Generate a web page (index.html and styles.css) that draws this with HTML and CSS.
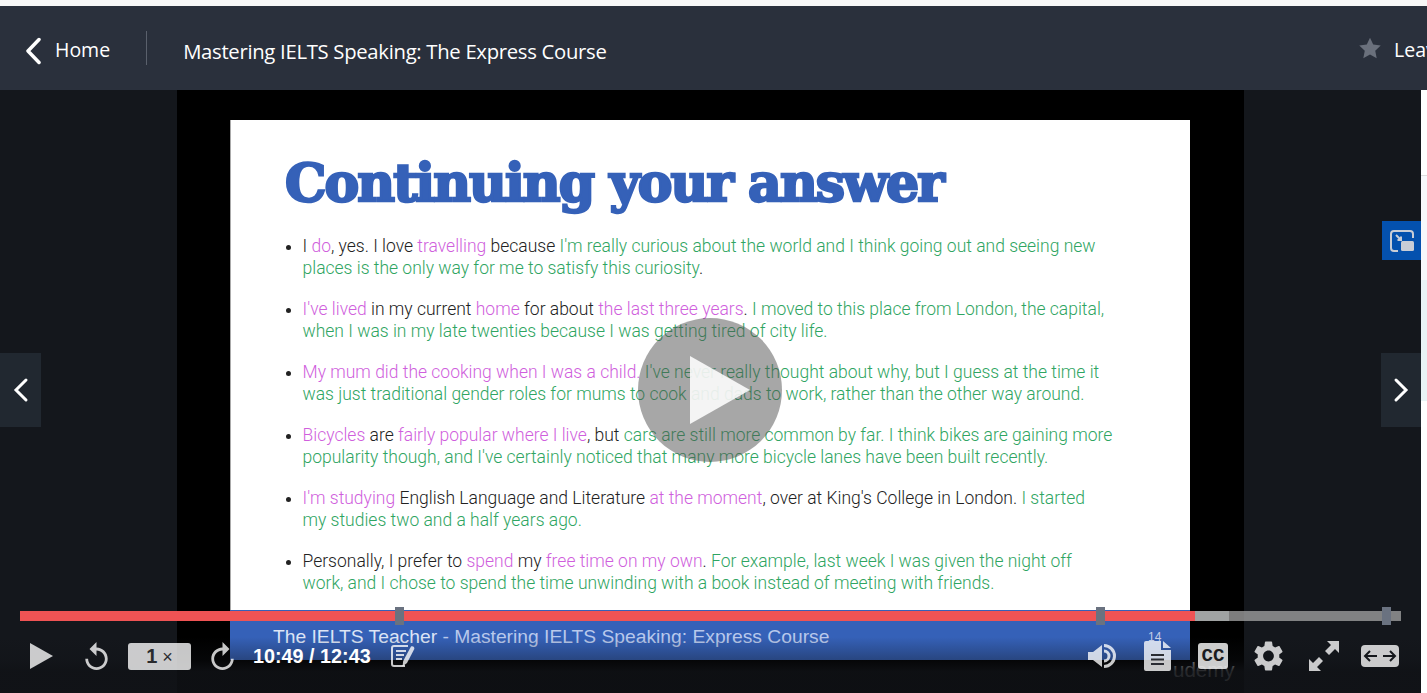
FILE: index.html
```html
<!DOCTYPE html>
<html lang="en">
<head>
    <meta charset="UTF-8">
    <meta name="viewport" content="width=device-width, initial-scale=1.0">
    <title>Mastering IELTS Speaking: The Express Course</title>
    <link rel="stylesheet" href="styles.css">
</head>
<body>
    <div class="top-strip"></div>
    <header class="header">
        <svg class="back-icon" viewBox="0 0 16 28"><path d="M14 2.500 3 14l11 11.500" /></svg>
        <a class="home-link">Home</a>
        <span class="divider"></span>
        <span class="course-title">Mastering IELTS Speaking: The Express Course</span>
        <div class="review">
            <svg class="star-icon" viewBox="0 0 24 24"><path d="M12 .8l3.500 7.500 8.200 1-6 5.700 1.600 8.200-7.300-4.100-7.300 4.100 1.600-8.200-6-5.700 8.200-1z"/></svg>
            <span>Leave a review</span>
        </div>
    </header>

    <main class="player">
        <div class="side"></div>
        <div class="video">
            <div class="slide">
                <h1 class="slide-title">Continuing your answer</h1>
                <ul class="points">
                    <li>I <span class="p">do</span>, yes. I love <span class="p">travelling</span> because <span class="g">I'm really curious about the world and I think going out and seeing new<br>places is the only way for me to satisfy this curiosity</span>.</li>
                    <li><span class="p">I've lived</span> in my current <span class="p">home</span> for about <span class="p">the last three years</span>. <span class="g">I moved to this place from London, the capital,<br>when I was in my late twenties because I was getting tired of city life.</span></li>
                    <li><span class="p">My mum did the cooking when I was a child.</span> <span class="g">I've never really thought about why, but I guess at the time it<br>was just traditional gender roles for mums to cook and dads to work, rather than the other way around.</span></li>
                    <li><span class="p">Bicycles</span> are <span class="p">fairly popular where I live</span>, but <span class="g">cars are still more common by far. I think bikes are gaining more<br>popularity though, and I've certainly noticed that many more bicycle lanes have been built recently.</span></li>
                    <li><span class="p">I'm studying</span> English Language and Literature <span class="p">at the moment</span>, over at King's College in London. <span class="g">I started<br>my studies two and a half years ago.</span></li>
                    <li>Personally, I prefer to <span class="p">spend</span> my <span class="p">free time on my own</span>. <span class="g">For example, last week I was given the night off<br>work, and I chose to spend the time unwinding with a book instead of meeting with friends.</span></li>
                </ul>
            </div>
            <div class="band"><b>The IELTS Teacher</b> - Mastering IELTS Speaking: Express Course</div>
            <div class="watermark">udemy</div>
        </div>
        <div class="side"></div>
        <div class="edge">
            <div class="edge-white"></div>
            <div class="edge-grey"></div>
            <div class="edge-blue"></div>
        </div>

        <!-- things lying over the video -->
        <button class="nav nav-prev"><svg viewBox="0 0 16 28"><path d="M13 4 3 14l10 10"/></svg></button>
        <button class="nav nav-next"><svg viewBox="0 0 16 28"><path d="M3 4l10 10L3 24"/></svg></button>
        <button class="pip">
            <svg viewBox="0 0 26 26"><path class="pip-line" d="M24 10V6a3 3 0 0 0-3-3H5a3 3 0 0 0-3 3v14a3 3 0 0 0 3 3h4M7 7l5 5M12 8.500V12H8.500"/><rect x="12" y="13" width="13" height="10" rx="1.500"/></svg>
        </button>

        <div class="play-big">
            <svg viewBox="0 0 60 68"><path d="M0 0l60 34L0 68z"/></svg>
        </div>

        <div class="controls">
            <div class="progress">
                <div class="played"></div>
                <div class="buffered"></div>
                <span class="mark mark-1"></span>
                <span class="mark mark-2"></span>
                <span class="mark mark-3"></span>
            </div>
            <div class="control-row">
                <div class="control-group">
                    <svg class="ctl ctl-play" viewBox="0 0 23 26"><path d="M0 0l23 13L0 26z"/></svg>
                    <svg class="ctl ctl-seek" viewBox="4 1 16 20"><path d="M12 5V1L7 6l5 5V7c3.310 0 6 2.690 6 6s-2.690 6-6 6-6-2.690-6-6H4c0 4.420 3.580 8 8 8s8-3.580 8-8-3.580-8-8-8z"/></svg>
                    <div class="speed">1<small>×</small></div>
                    <svg class="ctl ctl-seek ctl-forward" viewBox="4 1 16 20"><path d="M12 5V1L7 6l5 5V7c3.310 0 6 2.690 6 6s-2.690 6-6 6-6-2.690-6-6H4c0 4.420 3.580 8 8 8s8-3.580 8-8-3.580-8-8-8z"/></svg>
                    <span class="time">10:49 / 12:43</span>
                    <svg class="ctl ctl-notes" viewBox="0 0 24 22"><path class="notes-line" d="M17 1H3a2 2 0 0 0-2 2v16a2 2 0 0 0 2 2h11M5 6h10M5 10h8M5 14h6"/><path d="M20 1.500c1.800-1 3.800.6 3.300 2.500L16 18l-4.500 3.500.7-5.500z"/></svg>
                </div>
                <div class="control-group right">
                    <svg class="ctl ctl-volume" viewBox="0 0 28 24"><path d="M0 8h5l9-7v22l-9-7H0z"/><path class="arc" d="M16 7a5 5 0 0 1 0 10M16 1.500a10.500 10.500 0 0 1 0 21"/></svg>
                    <div class="doc">
                        <span class="doc-count">14</span>
                        <svg class="ctl ctl-doc" viewBox="0 0 27 30"><path d="M2 0h15v9h10v19a2 2 0 0 1-2 2H2a2 2 0 0 1-2-2V2a2 2 0 0 1 2-2zM19 0l8 7h-8z"/><path class="doc-lines" d="M7 14h13M7 18.500h13M7 23h13"/></svg>
                    </div>
                    <div class="cc">CC</div>
                    <svg class="ctl ctl-gear" viewBox="2.400 2 19.200 20"><path d="M19.140 12.940c.04-.3.06-.61.06-.94 0-.32-.02-.64-.07-.94l2.030-1.580c.18-.14.23-.41.12-.61l-1.920-3.320c-.12-.22-.37-.29-.59-.22l-2.390.96c-.5-.38-1.030-.7-1.620-.94l-.36-2.540c-.04-.24-.24-.41-.48-.41h-3.840c-.24 0-.43.17-.47.41l-.36 2.540c-.59.24-1.130.57-1.620.94l-2.390-.96c-.22-.08-.47 0-.59.22L2.740 8.870c-.12.21-.08.47.12.61l2.030 1.580c-.05.3-.09.63-.09.94s.02.64.07.94l-2.030 1.580c-.18.14-.23.41-.12.61l1.920 3.320c.12.22.37.29.59.22l2.390-.96c.5.38 1.030.7 1.620.94l.36 2.540c.05.24.24.41.48.41h3.840c.24 0 .44-.17.47-.41l.36-2.540c.59-.24 1.130-.56 1.620-.94l2.390.96c.22.08.47 0 .59-.22l1.920-3.320c.12-.22.07-.47-.12-.61l-2.010-1.580zM12 15.600c-1.980 0-3.600-1.620-3.600-3.600s1.620-3.600 3.600-3.600 3.600 1.620 3.600 3.600-1.620 3.600-3.600 3.600z"/></svg>
                    <svg class="ctl ctl-expand" viewBox="0 0 30 30"><path d="M18 0h12v12l-4-4-6 6-4-4 6-6zM12 30H0V18l4 4 6-6 4 4-6 6z"/></svg>
                    <svg class="ctl ctl-wide" viewBox="0 0 38 22"><rect width="38" height="22" rx="4"/><path class="wide-arrows" d="M16 11H4M9 6l-5 5 5 5M22 11h12M29 6l5 5-5 5"/></svg>
                </div>
            </div>
        </div>
    </main>
</body>
</html>
```

FILE: styles.css
```css
* {
    box-sizing: border-box;
}
body {
    margin: 0;
    height: 693px;
    overflow: hidden;
    background: #14171c;
    font-family: "Open Sans", Arial, sans-serif;
}
.top-strip {
    height: 6px;
    background: #f7f7f7;
}

/* header */
.header {
    height: 84px;
    padding: 5px 0 0 25px;
    display: flex;
    align-items: center;
    overflow: hidden;
    background: #2a303c;
    color: #fff;
}
.back-icon {
    width: 16px;
    height: 28px;
    flex-shrink: 0;
}
.back-icon path {
    fill: none;
    stroke: #fff;
    stroke-width: 3.500;
    stroke-linecap: round;
    stroke-linejoin: round;
}
.home-link {
    margin: 0 0 2px 14px;
    font-size: 19.500px;
}
.divider {
    width: 1px;
    height: 34px;
    margin: 0 36px 5px 36px;
    background: #5a606c;
}
.course-title {
    margin-top: 1px;
    font-size: 20.300px;
    letter-spacing: -0.300px;
    white-space: nowrap;
}
.review {
    width: 68px;
    margin: 0 0 2px auto;
    display: flex;
    align-items: center;
    gap: 13px;
    font-size: 19.500px;
    white-space: nowrap;
}
.star-icon {
    width: 22px;
    height: 22px;
    margin-bottom: 3px;
    flex-shrink: 0;
    fill: #6a707c;
}

/* player */
.player {
    position: relative;
    height: 603px;
    display: flex;
    overflow: hidden;
}
.side {
    width: 177px;
    flex-shrink: 0;
    background: #14171c;
}
.edge {
    width: 6px;
    flex-shrink: 0;
    background: #fff;
}
.edge-white {
    height: 86px;
    border-bottom: 1px solid #ddd;
}
.edge-grey {
    height: 104px;
    background: #f7f8fb;
}
.edge-blue {
    height: 121px;
    background: #e8f3f5;
}
.video {
    position: relative;
    width: 1067px;
    flex-shrink: 0;
    padding: 30px 54px 0 53px;
    background: #000;
}
.slide {
    height: 490px;
    padding: 30px 0 0 54px;
    background: #fff;
    border-left: 1px solid #aaa;
}
.slide-title {
    margin: 0;
    font-family: "DejaVu Serif", serif;
    font-size: 52px;
    line-height: 66px;
    font-weight: bold;
    letter-spacing: -1.900px;
    color: #3561b8;
    -webkit-text-stroke: 2.500px #3561b8;
    white-space: nowrap;
}
.points {
    margin: 20px 0 0;
    padding: 0 0 0 17.500px;
    font-family: Roboto, "Liberation Sans", Arial, sans-serif;
    font-size: 17.500px;
    font-weight: 300;
    line-height: 21.500px;
    color: #222;
    white-space: nowrap;
}
.points li {
    margin-bottom: 20px;
}
.p {
    color: #d05fdd;
}
.g {
    color: #2fa562;
}
.band {
    height: 50px;
    padding: 16px 0 0 43px;
    font-family: "Liberation Sans", Arial, sans-serif;
    font-size: 19.250px;
    color: #b9c9ec;
    background: #3561b8;
}
.band b {
    font-weight: normal;
    color: #dde5f6;
}
.watermark {
    position: absolute;
    left: 996px;
    top: 568px;
    font-family: "Liberation Sans", Arial, sans-serif;
    font-size: 20.500px;
    color: #a0a0a0;
}

/* overlays */
.nav {
    position: absolute;
    top: 263px;
    width: 41px;
    height: 74px;
    padding: 0;
    border: 0;
    background: #212830;
    display: flex;
    align-items: center;
    justify-content: center;
}
.nav svg {
    width: 16px;
    height: 28px;
}
.nav path {
    fill: none;
    stroke: #fff;
    stroke-width: 3;
    stroke-linecap: round;
    stroke-linejoin: miter;
}
.nav-prev {
    left: 0;
}
.nav-next {
    left: 1381px;
    width: 40px;
}
.pip {
    position: absolute;
    left: 1382px;
    top: 131px;
    width: 39px;
    height: 39px;
    padding: 0;
    border: 0;
    background: #0451ae;
    display: flex;
    align-items: center;
    justify-content: center;
}
.pip svg {
    width: 26px;
    height: 26px;
    fill: #c9cdd6;
}
.pip-line {
    fill: none;
    stroke: #c9cdd6;
    stroke-width: 2;
}
.play-big {
    position: absolute;
    left: 638px;
    top: 228px;
    width: 144px;
    height: 144px;
    border-radius: 50%;
    background: rgba(80, 80, 80, 0.5);
    display: flex;
    align-items: center;
    justify-content: center;
}
.play-big svg {
    width: 60px;
    height: 68px;
    margin-left: 20px;
    fill: rgba(255, 255, 255, 0.87);
}
.controls {
    position: absolute;
    left: 0;
    bottom: 0;
    width: 1421px;
    height: 86px;
    padding: 4px 22px 0 30px;
    background: linear-gradient(to bottom, rgba(16, 18, 22, 0) 35%, rgba(16, 18, 22, 0.35) 62%, rgba(16, 18, 22, 0.85) 75%, rgba(16, 18, 22, 0.85) 100%);
}
.progress {
    position: absolute;
    left: 20px;
    top: 4px;
    width: 1381px;
    height: 10px;
    background: rgba(160, 160, 160, 0.78);
}
.played {
    position: absolute;
    left: 0;
    top: 0;
    width: 1175px;
    height: 10px;
    background: #ef5354;
}
.buffered {
    position: absolute;
    left: 1175px;
    top: 0;
    width: 34px;
    height: 10px;
    background: #a0a3a3;
}
.mark {
    position: absolute;
    top: -4px;
    width: 9px;
    height: 18px;
    background: #6a7280;
}
.mark-1 {
    left: 375px;
}
.mark-2 {
    left: 1076px;
}
.mark-3 {
    left: 1362px;
}
.control-row {
    display: flex;
    justify-content: space-between;
    align-items: center;
    height: 30px;
    margin-top: 30px;
}
.control-group {
    display: flex;
    align-items: center;
    gap: 20px;
}
.control-group.right {
    gap: 26px;
}
.ctl {
    display: block;
    flex-shrink: 0;
    fill: rgba(255, 255, 255, 0.78);
}
.ctl-play {
    width: 23px;
    height: 26px;
    margin-right: 12px;
}
.ctl-seek {
    width: 23px;
    height: 28px;
}
.ctl-forward {
    transform: scaleX(-1);
}
.speed {
    width: 63px;
    height: 27px;
    border-radius: 3px;
    background: rgba(255, 255, 255, 0.78);
    color: #2a2b2e;
    font-family: "Liberation Sans", Arial, sans-serif;
    font-size: 20px;
    font-weight: bold;
    line-height: 27px;
    text-align: center;
}
.speed small {
    margin-left: 5px;
    font-size: 18px;
    font-weight: normal;
}
.time {
    margin-left: -1px;
    color: #fff;
    font-family: "Liberation Sans", Arial, sans-serif;
    font-size: 19.800px;
    font-weight: bold;
    white-space: nowrap;
}
.ctl-notes {
    width: 24px;
    height: 22px;
}
.notes-line {
    fill: none;
    stroke: rgba(255, 255, 255, 0.78);
    stroke-width: 2;
}
.ctl-volume {
    width: 28px;
    height: 24px;
    margin-right: 2px;
}
.arc {
    fill: none;
    stroke: rgba(255, 255, 255, 0.78);
    stroke-width: 3;
}
.doc {
    position: relative;
    width: 28px;
}
.doc-count {
    position: absolute;
    left: 4px;
    top: -11px;
    font-family: "Liberation Sans", Arial, sans-serif;
    font-size: 12px;
    color: #c3cde6;
}
.ctl-doc {
    width: 27px;
    height: 30px;
}
.doc-lines {
    fill: none;
    stroke: #2a2c33;
    stroke-width: 2;
}
.cc {
    width: 30px;
    height: 26px;
    border-radius: 3px;
    background: rgba(255, 255, 255, 0.8);
    color: #1a1b1f;
    font-family: "Liberation Mono", monospace;
    font-size: 19px;
    font-weight: bold;
    line-height: 26px;
    text-align: center;
}
.ctl-gear {
    width: 29px;
    height: 30px;
}
.ctl-expand {
    width: 30px;
    height: 30px;
    margin-right: -4px;
}
.ctl-wide {
    width: 38px;
    height: 22px;
}
.wide-arrows {
    fill: none;
    stroke: #14171c;
    stroke-width: 2;
}
```
